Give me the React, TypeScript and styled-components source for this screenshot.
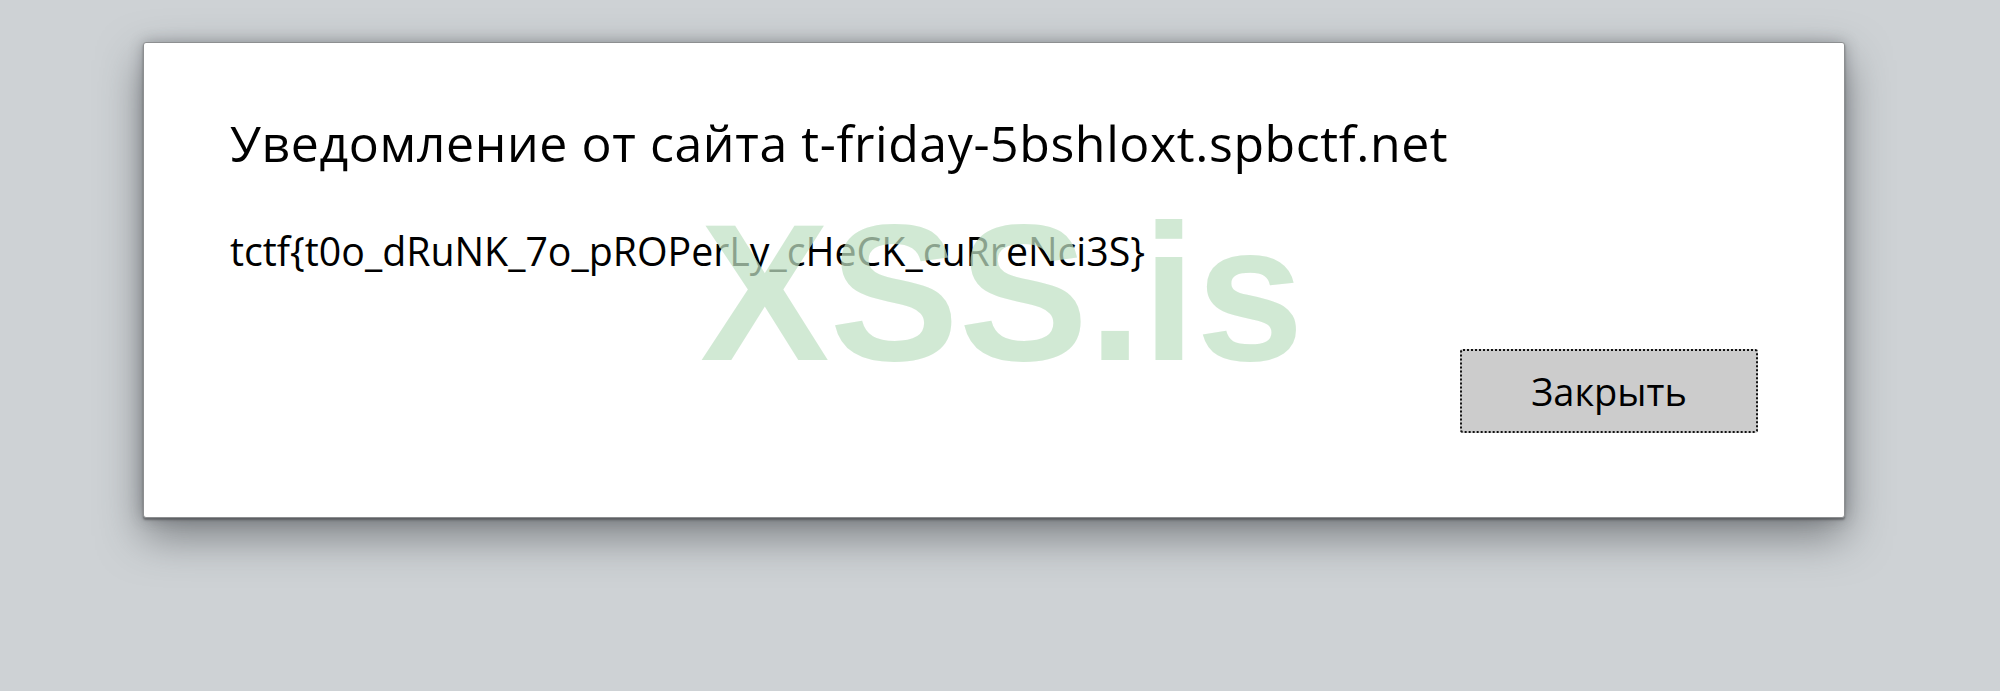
import React from 'react';
import styled, { createGlobalStyle } from 'styled-components';

const GlobalStyle = createGlobalStyle`
  html, body {
    margin: 0;
    padding: 0;
    background-color: #ced2d5;
  }
`;

const Page = styled.div`
  position: relative;
  display: flex;
  align-items: flex-start;
  width: 2000px;
  height: 691px;
  padding: 42px 0 0 143px;
  box-sizing: border-box;
  overflow: hidden;
  background-color: #ced2d5;
  font-family: 'Open Sans', 'Noto Sans', sans-serif;
`;

const Dialog = styled.div`
  display: flex;
  flex-direction: column;
  width: 1702px;
  height: 476px;
  padding: 75px 86px 0 86px;
  box-sizing: border-box;
  background-color: #ffffff;
  border: 1px solid #8d8f91;
  border-radius: 3px;
  box-shadow:
    0 2px 2px rgba(70, 72, 75, 0.6),
    0 0 14px rgba(60, 64, 68, 0.35),
    0 18px 44px rgba(55, 58, 62, 0.55);
`;

const Title = styled.h1`
  margin: 0;
  font-size: 50px;
  line-height: 1;
  letter-spacing: 0.6px;
  font-weight: 400;
  color: #000000;
  white-space: nowrap;
`;

const Message = styled.p`
  margin: 64px 0 0;
  font-size: 39.3px;
  line-height: 1;
  color: #000000;
  white-space: nowrap;
`;

const Footer = styled.div`
  display: flex;
  justify-content: flex-end;
  margin-top: 78px;
`;

const Button = styled.button`
  display: flex;
  align-items: center;
  justify-content: center;
  width: 298px;
  height: 84px;
  padding: 0;
  box-sizing: border-box;
  background-color: #cccccc;
  border: 2px dotted #111111;
  border-radius: 3px;
  font-family: inherit;
  font-size: 38px;
  color: #000000;
`;

const Watermark = styled.div`
  position: absolute;
  left: 700px;
  top: 196px;
  font-family: 'Liberation Sans', Arial, sans-serif;
  font-weight: 700;
  font-size: 194px;
  line-height: 1;
  color: rgb(192, 225, 196);
  opacity: 0.72;
  pointer-events: none;
  white-space: nowrap;
`;

export default function App() {
  return (
    <>
      <GlobalStyle />
      <Page>
        <Dialog>
          <Title>Уведомление от сайта t-friday-5bshloxt.spbctf.net</Title>
          <Message>tctf{'{'}t0o_dRuNK_7o_pROPerLy_cHeCK_cuRreNci3S{'}'}</Message>
          <Footer>
            <Button>Закрыть</Button>
          </Footer>
        </Dialog>
        <Watermark>XSS.is</Watermark>
      </Page>
    </>
  );
}
